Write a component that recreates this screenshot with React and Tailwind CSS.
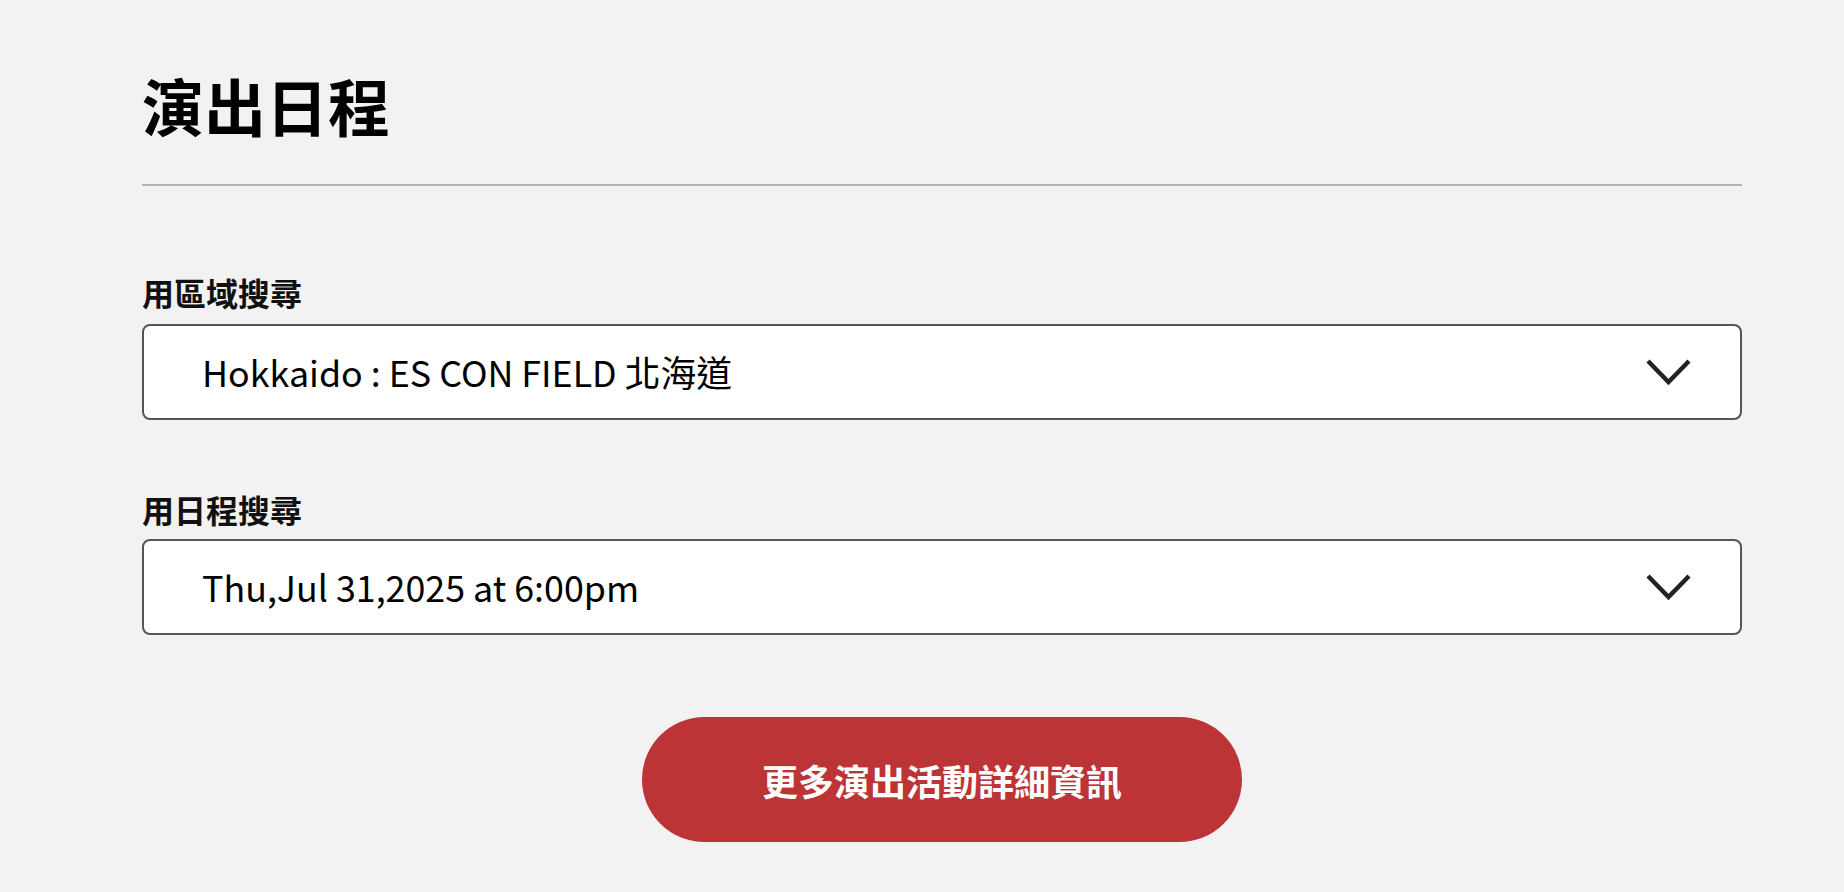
import React from 'react';

const font = { fontFamily: '"Noto Sans CJK TC", "Noto Sans", sans-serif' };

function Chevron() {
  return (
    <svg width="47" height="28" viewBox="0 0 47 28" fill="none" className="shrink-0">
      <polyline points="3,3 23.5,24 44,3" stroke="#222" strokeWidth="4.5" strokeLinejoin="miter" />
    </svg>
  );
}

function SelectField({ label, value, labelGap }) {
  return (
    <div className="flex flex-col">
      <label className="text-[32px] leading-[32px] font-bold text-[#111]">{label}</label>
      <div className={`${labelGap} flex h-[96px] items-center justify-between rounded-[8px] border-2 border-[#555] bg-white pl-[58px] pr-[48px]`}>
        <span className="text-[35.8px] leading-none text-black">{value}</span>
        <Chevron />
      </div>
    </div>
  );
}

export default function App() {
  return (
    <div className="min-h-[892px] w-full bg-[#f2f2f2]" style={font}>
      <div className="ml-[142px] w-[1600px] pt-[74px]">
        <h1 className="text-[62px] leading-[62px] font-bold text-black">演出日程</h1>
        <div className="mt-[48px] h-[2px] w-full bg-[#b3b3b3]" />

        <div className="mt-[90px]">
          <SelectField label="用區域搜尋" value="Hokkaido : ES CON FIELD 北海道" labelGap="mt-[16px]" />
        </div>
        <div className="mt-[73px]">
          <SelectField label="用日程搜尋" value="Thu,Jul 31,2025 at 6:00pm" labelGap="mt-[14px]" />
        </div>

        <div className="mt-[82px] flex justify-center">
          <button className="flex h-[125px] w-[600px] items-center justify-center rounded-full bg-[#bd3436] text-[36px] font-bold text-white">
            更多演出活動詳細資訊
          </button>
        </div>
      </div>
    </div>
  );
}
